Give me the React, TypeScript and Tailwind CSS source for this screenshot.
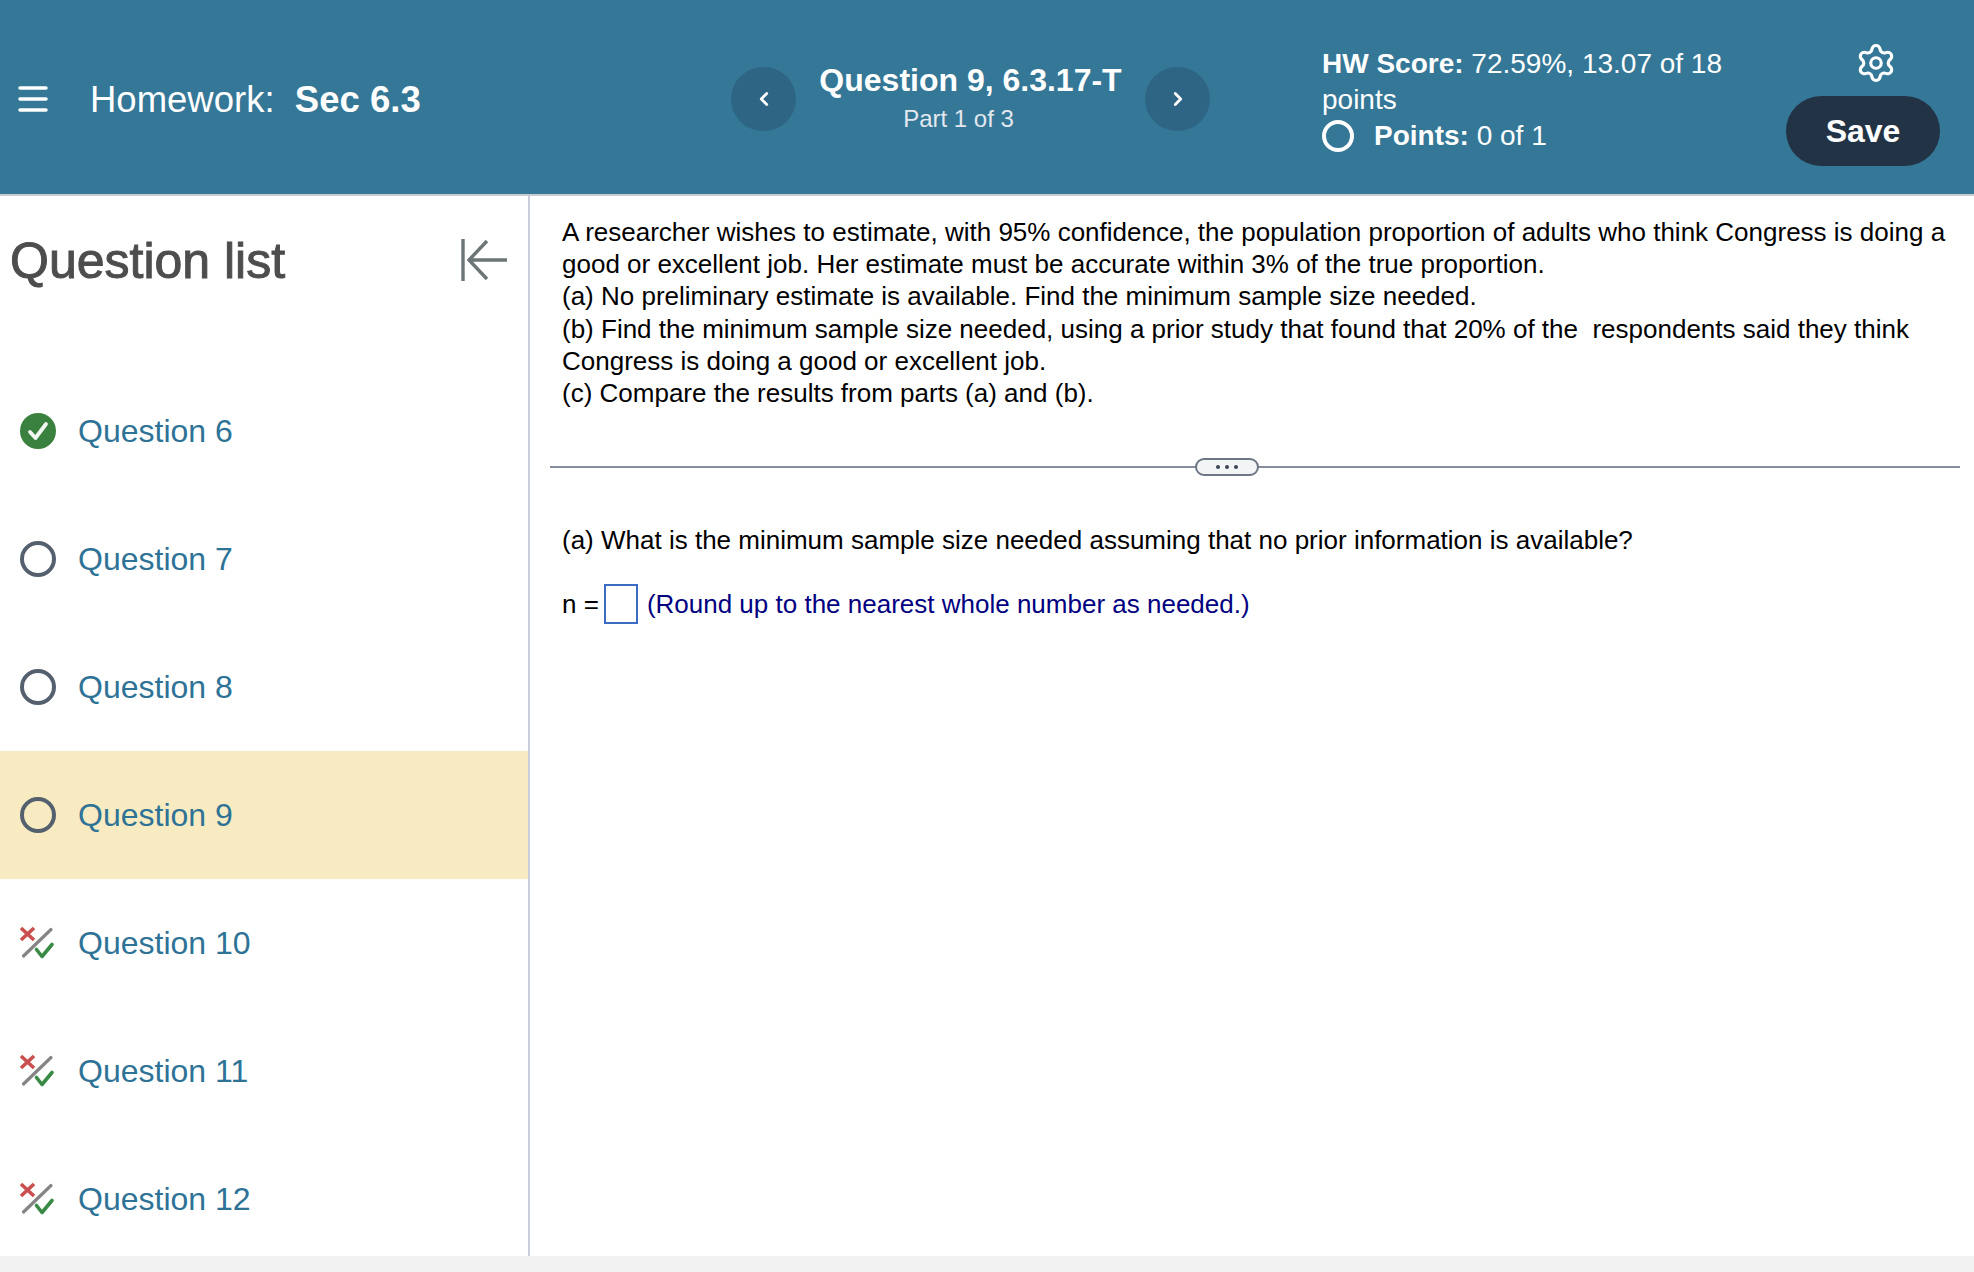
import { ChevronLeft, ChevronRight, Settings } from 'lucide-react'

const questions = [
  { id: 6, status: 'done' },
  { id: 7, status: 'open' },
  { id: 8, status: 'open' },
  { id: 9, status: 'open', current: true },
  { id: 10, status: 'partial' },
  { id: 11, status: 'partial' },
  { id: 12, status: 'partial' },
]

function StatusIcon({ status }: { status: string }) {
  if (status === 'done') {
    return (
      <svg width="36" height="36" viewBox="0 0 36 36">
        <circle cx="18" cy="18" r="18" fill="#3a8140" />
        <path d="M10 19l5.5 6L26 11" fill="none" stroke="#f2f7f2" strokeWidth="3.8" strokeLinecap="round" strokeLinejoin="round" />
      </svg>
    )
  }
  if (status === 'partial') {
    return (
      <svg width="36" height="36" viewBox="0 0 36 36">
        <path d="M1 3l13 12M14 3L1 15" stroke="#c9504f" strokeWidth="3.6" />
        <path d="M3.5 31L31 4.5" stroke="#858585" strokeWidth="3.2" strokeLinecap="round" />
        <path d="M16.5 24.5l5.5 7L32 19.5" fill="none" stroke="#3a8a45" strokeWidth="3.6" strokeLinecap="round" strokeLinejoin="round" />
      </svg>
    )
  }
  return <div className="h-9 w-9 rounded-full border-4 border-[#55606e]" />
}

export default function App() {
  return (
    <div className="flex h-[1272px] w-[1974px] flex-col overflow-hidden bg-[#f2f2f2] font-['Liberation_Sans',Arial,sans-serif]">
      {/* Top bar */}
      <header className="flex h-[196px] shrink-0 items-center border-b-2 border-[#c9cdd3] bg-[#347797] pt-[4px] text-white">
        <div className="flex w-[731px] shrink-0 items-center pl-[18px]">
          <svg width="30" height="28" viewBox="0 0 30 28" fill="none" stroke="white" strokeWidth="3.5" strokeLinecap="round">
            <path d="M2 3h26M2 14h26M2 25h26" />
          </svg>
          <div className="mt-[2px] ml-[42px] whitespace-pre text-[36.5px]">
            Homework:  <span className="font-bold">Sec 6.3</span>
          </div>
        </div>

        <div className="flex w-[479px] shrink-0 items-center justify-between">
          <button className="flex h-[64px] w-[65px] items-center justify-center rounded-full bg-[#2e6585]">
            <ChevronLeft size={22} strokeWidth={3} />
          </button>
          <div className="mb-[5px] text-center">
            <div className="text-[32px] leading-[38px] font-bold">Question 9, 6.3.17-T</div>
            <div className="mt-[6px] mr-[24px] text-[24px] leading-[28px] text-[#e3e8ef]">Part 1 of 3</div>
          </div>
          <button className="flex h-[64px] w-[65px] items-center justify-center rounded-full bg-[#2e6585]">
            <ChevronRight size={22} strokeWidth={3} />
          </button>
        </div>

        <div className="mt-[2px] ml-[112px] w-[464px] shrink-0 text-[28px] leading-[36px]">
          <div>
            <span className="font-bold">HW Score:</span> 72.59%, 13.07 of 18
          </div>
          <div>points</div>
          <div className="flex items-center">
            <div className="h-[32px] w-[32px] rounded-full border-4 border-white" />
            <div className="ml-[20px]">
              <span className="font-bold">Points:</span> 0 of 1
            </div>
          </div>
        </div>

        <div className="mt-[10px] flex w-[154px] shrink-0 flex-col items-center">
          <Settings size={42} strokeWidth={1.8} className="mb-[12px] ml-[25px]" />
          <button className="h-[70px] w-[154px] rounded-full bg-[#223345] text-[32px] font-bold">Save</button>
        </div>
      </header>

      <div className="flex h-[1060px] shrink-0 bg-white">
        {/* Question list */}
        <aside className="h-full w-[530px] shrink-0 overflow-hidden border-r-2 border-[#c9cdd9]">
          <div className="flex h-[171px] items-start justify-between pt-[35px] pl-[10px] pr-[20px]">
            <h1 className="text-[50px] leading-[60px] text-[#4d4d4d] [-webkit-text-stroke:1px_#4d4d4d]">Question list</h1>
            <svg width="48" height="46" viewBox="0 0 48 46" fill="none" stroke="#6c7676" strokeWidth="3.4" className="mt-[6px]">
              <path d="M3 2v42M47 23H11M27 4L9 23l18 19" />
            </svg>
          </div>
          <ul>
            {questions.map((q) => (
              <li
                key={q.id}
                className={`flex h-[128px] items-center pl-[20px] ${q.current ? 'bg-[#f8ebc2]' : ''}`}
              >
                <div className="h-9 w-9 shrink-0">
                  <StatusIcon status={q.status} />
                </div>
                <span className="ml-[22px] text-[32px] text-[#2e7396]">Question {q.id}</span>
              </li>
            ))}
          </ul>
        </aside>

        {/* Question body */}
        <main className="min-w-0 flex-1 text-[26px] text-black">
          <div className="whitespace-pre pt-[20px] pl-[32px] leading-[32.2px]">
            <div>A researcher wishes to estimate, with 95% confidence, the population proportion of adults who think Congress is doing a</div>
            <div>good or excellent job. Her estimate must be accurate within 3% of the true proportion.</div>
            <div>(a) No preliminary estimate is available. Find the minimum sample size needed.</div>
            <div>(b) Find the minimum sample size needed, using a prior study that found that 20% of the  respondents said they think</div>
            <div>Congress is doing a good or excellent job.</div>
            <div>(c) Compare the results from parts (a) and (b).</div>
          </div>

          <div className="relative mt-[57px] ml-[20px] h-[2px] w-[1410px] bg-[#868e9c]">
            <div className="absolute top-[-8px] left-[645px] flex h-[18px] w-[64px] items-center justify-center gap-[5px] rounded-full border-2 border-[#6c7684] bg-[#f3f4f6]">
              <span className="h-[4px] w-[4px] rounded-full bg-[#3c4654]" />
              <span className="h-[4px] w-[4px] rounded-full bg-[#3c4654]" />
              <span className="h-[4px] w-[4px] rounded-full bg-[#3c4654]" />
            </div>
          </div>

          <p className="mt-[56px] pl-[32px] leading-[32px]">
            (a) What is the minimum sample size needed assuming that no prior information is available?
          </p>

          <div className="mt-[28px] flex items-center pl-[32px]">
            <span>n =</span>
            <div className="ml-[5px] h-[40px] w-[34px] border-2 border-[#3b6cc4]" />
            <span className="ml-[9px] text-[#000080]">(Round up to the nearest whole number as needed.)</span>
          </div>
        </main>
      </div>
    </div>
  )
}
